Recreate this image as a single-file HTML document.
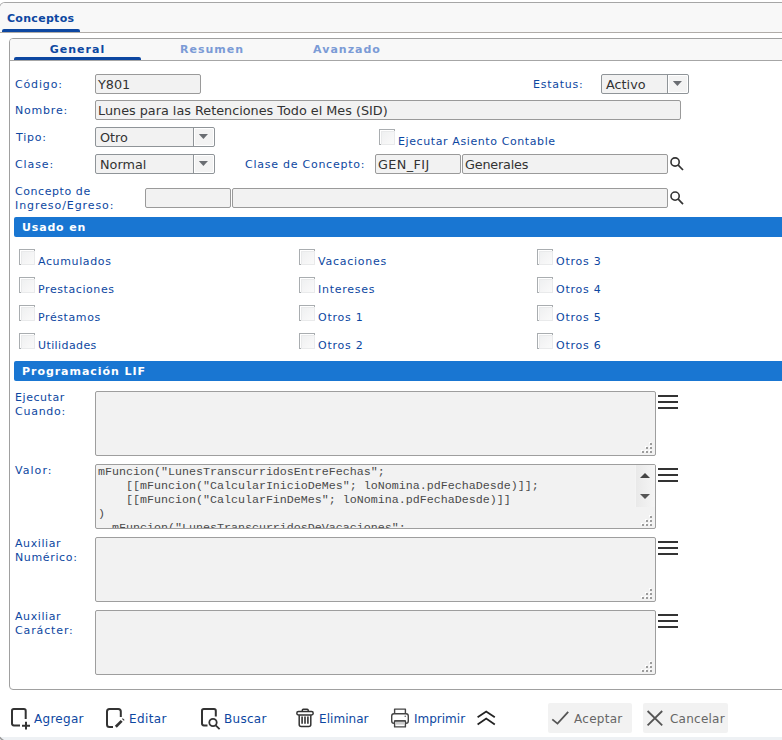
<!DOCTYPE html>
<html lang="es">
<head>
<meta charset="utf-8">
<title>Conceptos</title>
<style>
*{box-sizing:border-box;margin:0;padding:0}
html,body{width:782px;height:740px;overflow:hidden;background:#fff}
body{position:relative;font-family:"DejaVu Sans","Liberation Sans",sans-serif;font-size:11px;color:#0d47a1}
.abs{position:absolute}
#outer{position:absolute;left:-1px;top:2px;width:800px;height:735px;border:1px solid #a6a6a6;border-bottom:none;border-radius:6px 0 0 0;background:#fff;overflow:hidden}
#below{position:absolute;left:0;top:737px;width:782px;height:3px;background:#eef1f4;z-index:3}
#ohead{position:absolute;left:0;top:0;width:800px;height:30px;background:#f8f8f8;border-bottom:1px solid #b0aca8}
#otab{position:absolute;left:7px;top:12px;font-weight:bold;font-size:11px;line-height:14px;letter-spacing:.3px}
#oline{position:absolute;left:2px;top:29px;width:78px;height:3px;background:#0d47a1;border-radius:2px 2px 0 0}
#inner{position:absolute;left:9px;top:38px;width:800px;height:652px;border:1px solid #a0a0a0;border-radius:4px 0 0 4px;background:#fff;overflow:hidden}
#ihead{position:absolute;left:0;top:0;width:800px;height:22px;background:#f8f8f8;border-bottom:1px solid #a6a6a6}
.tab{position:absolute;top:43px;width:126px;text-align:center;font-weight:bold;font-size:11px;line-height:14px;letter-spacing:1px;color:#7b9bd6}
.tab.on{color:#0d47a1}
#iline{position:absolute;left:14px;top:57px;width:127px;height:3px;background:#0d47a1;border-radius:2px 2px 0 0}
.lbl{position:absolute;margin-top:1px;font-size:11px;line-height:14px;letter-spacing:.75px;white-space:nowrap;color:#0d47a1}
.inp{position:absolute;height:20px;background:#f2f2f2;border:1px solid #9a9a9a;border-radius:2px;font-size:12.8px;line-height:18px;color:#333;padding:1px 0 0 2px;white-space:nowrap;overflow:hidden}
.sel{position:absolute;height:20px;background:#f2f2f2;border:1px solid #8f9498;border-radius:2px;font-size:12.8px;line-height:18px;color:#333;padding:1px 0 0 4px;white-space:nowrap;overflow:hidden}
.sel i{position:absolute;right:-1px;top:-1px;width:22px;height:20px;border:1px solid #8f9498;border-radius:0 2px 2px 0;background:#f3f3f3;box-shadow:inset 0 0 0 1px #fff}
.sel i:after{content:"";position:absolute;left:4.6px;top:5.7px;width:9.6px;height:5.2px;background:#6a6d72;clip-path:polygon(0 0,100% 0,50% 100%)}
.cb{position:absolute;width:16px;height:16px;border:1px solid #a9adb0;background:#fff}
.cb:after{content:"";position:absolute;left:1px;top:1px;width:12px;height:12px;border:1px solid #e9eaeb;background:linear-gradient(135deg,#eff0f1,#fafafa)}
.bar{position:absolute;left:14px;width:780px;height:20px;background:#1976d2;border-radius:2px 0 0 2px;color:#fff;font-weight:bold;font-size:11px;line-height:14px;padding:4px 0 0 8px;letter-spacing:.83px}
.ta{position:absolute;left:95px;width:561px;height:65px;background:#f2f2f2;border:1px solid #9e9e9e;border-radius:2px;overflow:hidden}
.ta pre{position:absolute;left:2px;top:0;font-family:"Liberation Mono","DejaVu Sans Mono",monospace;font-size:11.67px;line-height:14px;color:#4a4a4a}
.grip{position:absolute;left:545px;top:50px}
.sb{position:absolute;left:539px;top:0;width:20px;height:42px;background:linear-gradient(90deg,#e9e9e9,#f5f5f5);border-left:1px solid #f4f4f4}
.sb:before{content:"";position:absolute;left:4px;top:8px;border-left:5px solid transparent;border-right:5px solid transparent;border-bottom:5.5px solid #444}
.sb:after{content:"";position:absolute;left:4px;top:29px;border-left:5px solid transparent;border-right:5px solid transparent;border-top:5.5px solid #555}
.ham{position:absolute;left:658px;width:20px;height:14px}
.ham b{position:absolute;left:0;width:20px;height:2px;background:#333}
.tb{position:absolute;top:712px;font-size:12px;line-height:15px;white-space:nowrap;color:#0d47a1}
.btn{position:absolute;top:703px;height:30px;background:#f2f2f2;border-radius:2px}
.btn span{position:absolute;top:9px;font-size:12px;line-height:15px;color:#666;white-space:nowrap}
svg{position:absolute;overflow:visible;z-index:2}
</style>
</head>
<body>
<div id="outer"><div id="ohead"></div></div>
<div id="below"><svg style="left:0;top:0" width="6" height="3" viewBox="0 0 6 3"><path d="M-.3 .2Q1.2 2 3.6 3.6" stroke="#9a9a9a" stroke-width="1.5" fill="none"/></svg></div>
<div id="otab">Conceptos</div>
<div id="oline"></div>
<div id="inner"><div id="ihead"></div></div>
<div class="tab on" style="left:14.5px">General</div>
<div class="tab" style="left:149px">Resumen</div>
<div class="tab" style="left:284px">Avanzado</div>
<div id="iline"></div>

<div class="lbl" style="left:15px;top:77px;letter-spacing:0.85px">Código:</div>
<div class="inp" style="left:95px;top:74px;width:106px">Y801</div>
<div class="lbl" style="left:533px;top:77px">Estatus:</div>
<div class="sel" style="left:601px;top:74px;width:88px">Activo<i></i></div>

<div class="lbl" style="left:15px;top:103px;letter-spacing:0.8px">Nombre:</div>
<div class="inp" style="left:95px;top:100px;width:586px">Lunes para las Retenciones Todo el Mes (SID)</div>

<div class="lbl" style="left:16px;top:130px;letter-spacing:0.8px">Tipo:</div>
<div class="sel" style="left:95px;top:127px;width:120px">Otro<i></i></div>
<div class="cb" style="left:379px;top:129px"></div>
<div class="lbl" style="left:398px;top:134px;letter-spacing:0.6px">Ejecutar Asiento Contable</div>

<div class="lbl" style="left:15px;top:157px;letter-spacing:0.89px">Clase:</div>
<div class="sel" style="left:95px;top:154px;width:120px">Normal<i></i></div>
<div class="lbl" style="left:245px;top:157px">Clase de Concepto:</div>
<div class="inp" style="left:375px;top:154px;width:86px;letter-spacing:.4px">GEN_FIJ</div>
<div class="inp" style="left:462px;top:154px;width:206px;letter-spacing:-.2px">Generales</div>

<div class="lbl" style="left:15px;top:184px"><span style="letter-spacing:.57px">Concepto de</span><br><span style="letter-spacing:.92px">Ingreso/Egreso:</span></div>
<div class="inp" style="left:145px;top:188px;width:86px"></div>
<div class="inp" style="left:232px;top:188px;width:436px"></div>

<div class="bar" style="top:217px">Usado en</div>

<div class="cb" style="left:19px;top:249px"></div><div class="lbl" style="left:38px;top:254px;letter-spacing:0.62px">Acumulados</div>
<div class="cb" style="left:19px;top:277px"></div><div class="lbl" style="left:38px;top:282px;letter-spacing:0.58px">Prestaciones</div>
<div class="cb" style="left:19px;top:305px"></div><div class="lbl" style="left:38px;top:310px;letter-spacing:0.6px">Préstamos</div>
<div class="cb" style="left:19px;top:333px"></div><div class="lbl" style="left:38px;top:338px;letter-spacing:0.4px">Utilidades</div>
<div class="cb" style="left:299px;top:249px"></div><div class="lbl" style="left:318px;top:254px">Vacaciones</div>
<div class="cb" style="left:299px;top:277px"></div><div class="lbl" style="left:318px;top:282px">Intereses</div>
<div class="cb" style="left:299px;top:305px"></div><div class="lbl" style="left:318px;top:310px">Otros 1</div>
<div class="cb" style="left:299px;top:333px"></div><div class="lbl" style="left:318px;top:338px">Otros 2</div>
<div class="cb" style="left:537px;top:249px"></div><div class="lbl" style="left:556px;top:254px">Otros 3</div>
<div class="cb" style="left:537px;top:277px"></div><div class="lbl" style="left:556px;top:282px">Otros 4</div>
<div class="cb" style="left:537px;top:305px"></div><div class="lbl" style="left:556px;top:310px">Otros 5</div>
<div class="cb" style="left:537px;top:333px"></div><div class="lbl" style="left:556px;top:338px">Otros 6</div>

<div class="bar" style="top:361px;letter-spacing:.95px">Programación LIF</div>

<div class="lbl" style="left:15px;top:390px"><span style="letter-spacing:.56px">Ejecutar</span><br>Cuando:</div>
<div class="ta" style="top:391px"><svg class="grip" width="12" height="12" viewBox="0 0 12 12" shape-rendering="crispEdges"><rect x="8" y="0" width="2" height="2" fill="#fff"/><rect x="9" y="1" width="2" height="2" fill="#9c9c9c"/><rect x="4" y="4" width="2" height="2" fill="#fff"/><rect x="5" y="5" width="2" height="2" fill="#9c9c9c"/><rect x="8" y="4" width="2" height="2" fill="#fff"/><rect x="9" y="5" width="2" height="2" fill="#9c9c9c"/><rect x="0" y="8" width="2" height="2" fill="#fff"/><rect x="1" y="9" width="2" height="2" fill="#9c9c9c"/><rect x="4" y="8" width="2" height="2" fill="#fff"/><rect x="5" y="9" width="2" height="2" fill="#9c9c9c"/><rect x="8" y="8" width="2" height="2" fill="#fff"/><rect x="9" y="9" width="2" height="2" fill="#9c9c9c"/></svg></div>
<div class="ham" style="top:395px"><b style="top:0"></b><b style="top:6px"></b><b style="top:12px"></b></div>

<div class="lbl" style="left:15px;top:463px;letter-spacing:1.05px">Valor:</div>
<div class="ta" style="top:464px"><pre>mFuncion("LunesTranscurridosEntreFechas";
    [[mFuncion("CalcularInicioDeMes"; loNomina.pdFechaDesde)]];
    [[mFuncion("CalcularFinDeMes"; loNomina.pdFechaDesde)]]
)
- mFuncion("LunesTranscurridosDeVacaciones";</pre><div class="sb"></div><svg class="grip" width="12" height="12" viewBox="0 0 12 12" shape-rendering="crispEdges"><rect x="8" y="0" width="2" height="2" fill="#fff"/><rect x="9" y="1" width="2" height="2" fill="#9c9c9c"/><rect x="4" y="4" width="2" height="2" fill="#fff"/><rect x="5" y="5" width="2" height="2" fill="#9c9c9c"/><rect x="8" y="4" width="2" height="2" fill="#fff"/><rect x="9" y="5" width="2" height="2" fill="#9c9c9c"/><rect x="0" y="8" width="2" height="2" fill="#fff"/><rect x="1" y="9" width="2" height="2" fill="#9c9c9c"/><rect x="4" y="8" width="2" height="2" fill="#fff"/><rect x="5" y="9" width="2" height="2" fill="#9c9c9c"/><rect x="8" y="8" width="2" height="2" fill="#fff"/><rect x="9" y="9" width="2" height="2" fill="#9c9c9c"/></svg></div>
<div class="ham" style="top:468px"><b style="top:0"></b><b style="top:6px"></b><b style="top:12px"></b></div>

<div class="lbl" style="left:15px;top:536px"><span style="letter-spacing:.6px">Auxiliar</span><br><span style="letter-spacing:.64px">Numérico:</span></div>
<div class="ta" style="top:537px"><svg class="grip" width="12" height="12" viewBox="0 0 12 12" shape-rendering="crispEdges"><rect x="8" y="0" width="2" height="2" fill="#fff"/><rect x="9" y="1" width="2" height="2" fill="#9c9c9c"/><rect x="4" y="4" width="2" height="2" fill="#fff"/><rect x="5" y="5" width="2" height="2" fill="#9c9c9c"/><rect x="8" y="4" width="2" height="2" fill="#fff"/><rect x="9" y="5" width="2" height="2" fill="#9c9c9c"/><rect x="0" y="8" width="2" height="2" fill="#fff"/><rect x="1" y="9" width="2" height="2" fill="#9c9c9c"/><rect x="4" y="8" width="2" height="2" fill="#fff"/><rect x="5" y="9" width="2" height="2" fill="#9c9c9c"/><rect x="8" y="8" width="2" height="2" fill="#fff"/><rect x="9" y="9" width="2" height="2" fill="#9c9c9c"/></svg></div>
<div class="ham" style="top:541px"><b style="top:0"></b><b style="top:6px"></b><b style="top:12px"></b></div>

<div class="lbl" style="left:15px;top:609px"><span style="letter-spacing:.6px">Auxiliar</span><br><span style="letter-spacing:.87px">Carácter:</span></div>
<div class="ta" style="top:610px"><svg class="grip" width="12" height="12" viewBox="0 0 12 12" shape-rendering="crispEdges"><rect x="8" y="0" width="2" height="2" fill="#fff"/><rect x="9" y="1" width="2" height="2" fill="#9c9c9c"/><rect x="4" y="4" width="2" height="2" fill="#fff"/><rect x="5" y="5" width="2" height="2" fill="#9c9c9c"/><rect x="8" y="4" width="2" height="2" fill="#fff"/><rect x="9" y="5" width="2" height="2" fill="#9c9c9c"/><rect x="0" y="8" width="2" height="2" fill="#fff"/><rect x="1" y="9" width="2" height="2" fill="#9c9c9c"/><rect x="4" y="8" width="2" height="2" fill="#fff"/><rect x="5" y="9" width="2" height="2" fill="#9c9c9c"/><rect x="8" y="8" width="2" height="2" fill="#fff"/><rect x="9" y="9" width="2" height="2" fill="#9c9c9c"/></svg></div>
<div class="ham" style="top:614px"><b style="top:0"></b><b style="top:6px"></b><b style="top:12px"></b></div>


<svg style="left:669px;top:156px" width="16" height="16" viewBox="0 0 16 16"><circle cx="6.1" cy="6" r="4.1" fill="none" stroke="#333" stroke-width="1.6"/><path d="M9.2 9.1L14 14" stroke="#333" stroke-width="1.7" fill="none"/></svg>
<svg style="left:669px;top:190px" width="16" height="16" viewBox="0 0 16 16"><circle cx="6.1" cy="6.1" r="4.1" fill="none" stroke="#333" stroke-width="1.6"/><path d="M9.2 9.2L14 14.1" stroke="#333" stroke-width="1.7" fill="none"/></svg>

<svg style="left:0;top:700px" width="782" height="40" viewBox="0 700 782 40" fill="none" stroke="#333" stroke-width="2" stroke-linejoin="round">
<!-- agregar -->
<path d="M25.7 719V710.8Q25.7 709 23.9 709H13.8Q12 709 12 710.8V723.6Q12 725.4 13.8 725.4H20"/>
<path d="M22 725.7H30M26 721.8V729.6"/>
<!-- editar -->
<path d="M120.8 717V711.5Q120.8 709 118.3 709H109.5Q107 709 107 711.5V724.4Q107 726.9 109.5 726.9H113"/>
<path d="M115.8 726.8L121.7 720.9" stroke-width="2.7"/>
<path d="M122.9 719.9L123.7 719.1" stroke-width="2.7"/>
<!-- buscar -->
<path d="M215.8 716.5V710.8Q215.8 709 214 709H203.8Q202 709 202 710.8V723.6Q202 725.4 203.8 725.4H207.5"/>
<circle cx="213" cy="722.5" r="3.7" stroke-width="1.8"/>
<path d="M215.7 725.3L219.6 729.1" stroke-width="1.8"/>
<!-- eliminar -->
<g stroke-width="1.5">
<path d="M302.3 711V710.3Q302.3 709.3 303.3 709.3H307.2Q308.2 709.3 308.2 710.3V711"/>
<rect x="296.8" y="711.6" width="16.4" height="3.4" rx="1.7"/>
<path d="M299.2 715.2V724.6Q299.2 726.6 301.2 726.6H308.8Q310.8 726.6 310.8 724.6V715.2"/>
<path d="M302.1 716.6V723.8M305 716.6V723.8M307.9 716.6V723.8" stroke-width="1.6"/>
</g>
<!-- imprimir -->
<g stroke="#444" stroke-width="1.4">
<rect x="394.6" y="720.9" width="10.8" height="6" fill="#fff"/>
<rect x="395.4" y="721.6" width="9.2" height="3" fill="#ccc" stroke="none"/>
<path d="M394.6 713.6V709.1H405.4V713.6"/>
<path d="M394.6 723.2H393.9Q391.7 723.2 391.7 721V716Q391.7 713.8 393.9 713.8H406.1Q408.3 713.8 408.3 716V721Q408.3 723.2 406.1 723.2H405.4"/>
<path d="M394.6 720.9H405.4"/>
<circle cx="405.2" cy="716.2" r=".7" fill="#444" stroke="none"/>
</g>
<!-- chevrons -->
<path d="M477.6 717.3L486.2 711.6L494.8 717.3M477.6 724.4L486.2 718.6L494.8 724.4" stroke="#222" stroke-width="1.8" stroke-linejoin="miter"/>
<!-- check -->
<path d="M552.3 719.4L557.5 723.6L568.2 711.9" stroke="#555" stroke-width="1.8" stroke-linejoin="miter"/>
<!-- x -->
<path d="M647.6 711L662.2 725.3M662.2 711L647.6 725.3" stroke="#555" stroke-width="1.8"/>
</svg>
<div class="tb" style="left:34px;letter-spacing:0.28px">Agregar</div>
<div class="tb" style="left:129px;letter-spacing:0.4px">Editar</div>
<div class="tb" style="left:224px;letter-spacing:0.28px">Buscar</div>
<div class="tb" style="left:319px;letter-spacing:0.05px">Eliminar</div>
<div class="tb" style="left:414px;letter-spacing:0px">Imprimir</div>
<div class="btn" style="left:548px;width:84px"><span style="left:26px;letter-spacing:.28px">Aceptar</span></div>
<div class="btn" style="left:643px;width:85px"><span style="left:27px;letter-spacing:.24px">Cancelar</span></div>
</body>
</html>
